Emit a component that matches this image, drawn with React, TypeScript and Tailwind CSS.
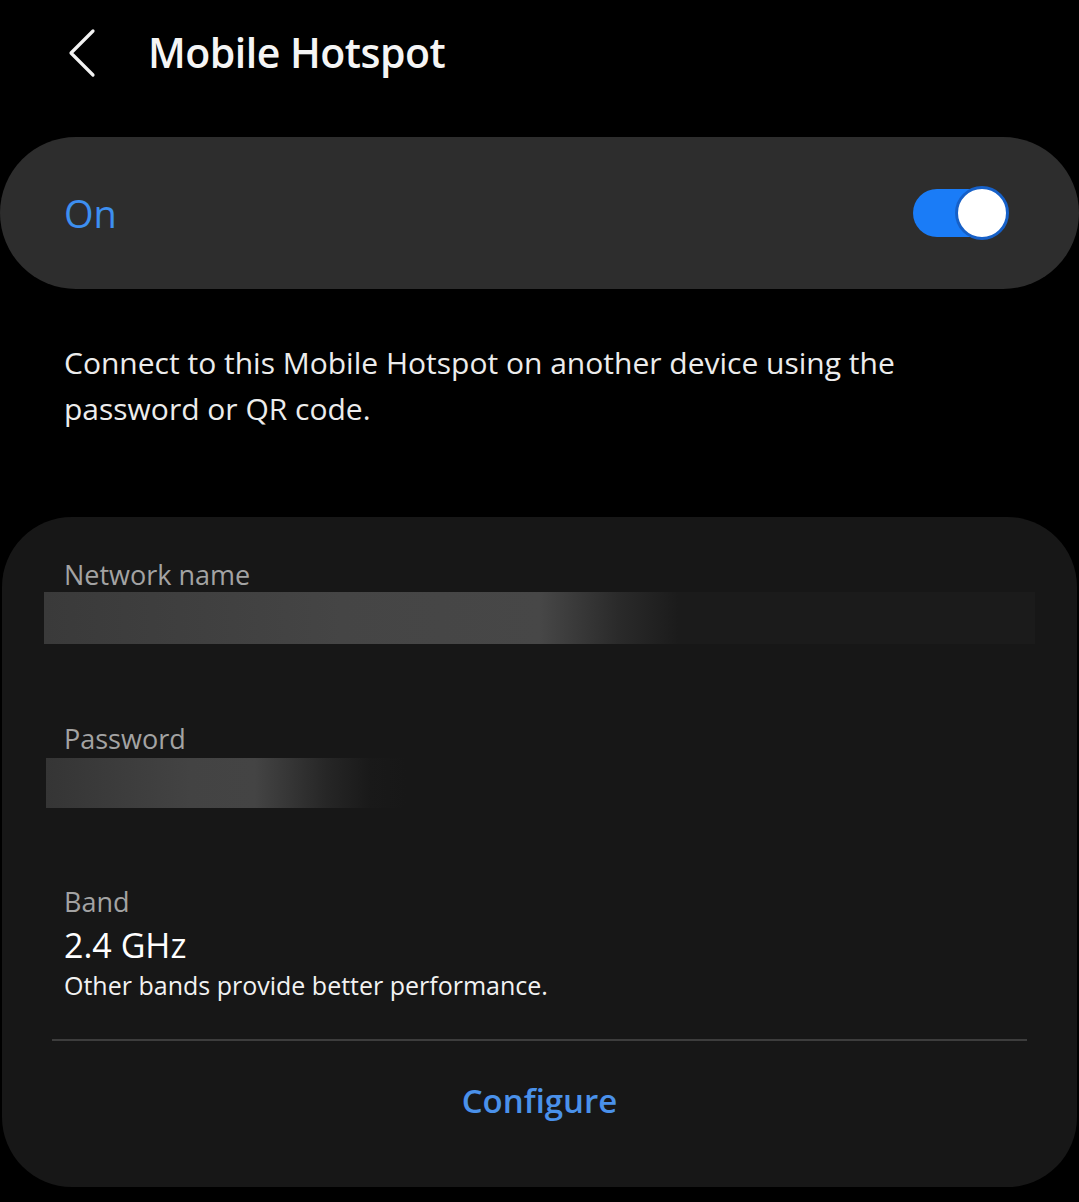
import React from "react";

export default function App() {
  return (
    <div className="w-[1079px] h-[1202px] bg-black overflow-hidden" style={{ fontFamily: '"Open Sans", "Noto Sans", sans-serif' }}>
      {/* Header */}
      <div className="h-[110px] flex items-center pl-[66px]">
        <svg width="32" height="52" viewBox="0 0 32 52" className="mt-[-4px]">
          <path d="M27 4 L5 26 L27 48" stroke="#f2f2f2" strokeWidth="3.2" fill="none" strokeLinecap="round" strokeLinejoin="round" />
        </svg>
        <div className="ml-[50px] text-[41px] text-[#f5f5f5] font-semibold tracking-[-0.5px] mt-[-4px]">Mobile Hotspot</div>
      </div>

      {/* On card */}
      <div className="mt-[27px] h-[152px] rounded-full bg-[#2d2d2d] flex items-center justify-between pl-[64px] pr-[70px]">
        <div className="text-[38px] text-[#3d8ff0] font-medium">On</div>
        <div className="relative w-[96px] h-[54px]">
          <div className="absolute left-0 top-[3px] w-[90px] h-[48px] rounded-full bg-[#1a7cf7]" />
          <div className="absolute right-0 top-0 w-[54px] h-[54px] rounded-full bg-white border-[3px] border-[#1660c8]" />
        </div>
      </div>

      {/* Description */}
      <div className="pl-[64px] w-[930px] mt-[51px] text-[30px] leading-[46px] text-[#ececec]">
        Connect to this Mobile Hotspot on another device using the password or QR code.
      </div>

      {/* Details card */}
      <div className="mt-[85px] mx-[2px] h-[670px] rounded-[70px] bg-[#171717] flex flex-col">
        <div className="pt-[38px] pl-[62px] text-[27px] text-[#a3a3a3]">Network name</div>
        <div className="mt-[-4px] ml-[42px] mr-[42px] h-[52px] bg-[linear-gradient(90deg,#3a3a3a_0%,#454545_30%,#474747_50%,#2a2a2a_58%,#1b1b1b_64%,#1b1b1b_100%)]" />

        <div className="mt-[75px] pl-[62px] text-[27px] text-[#a3a3a3]">Password</div>
        <div className="mt-[-1px] ml-[44px] w-[360px] h-[50px] bg-[linear-gradient(90deg,#353535_0%,#434343_40%,#444444_58%,#262626_78%,#191919_90%,#171717_100%)]" />

        <div className="mt-[74px] pl-[62px] text-[27px] text-[#a3a3a3]">Band</div>
        <div className="pl-[62px] text-[34px] leading-[44px] text-white">2.4 GHz</div>
        <div className="pl-[62px] text-[25px] leading-[36px] text-[#f2f2f2]">Other bands provide better performance.</div>

        <div className="mt-[36px] mx-[50px] h-[2px] bg-[#3d3d3d]" />

        <div className="flex-1 flex justify-center pt-[35px]">
          <div className="text-[33px] text-[#4a91ea] font-semibold">Configure</div>
        </div>
      </div>
    </div>
  );
}
